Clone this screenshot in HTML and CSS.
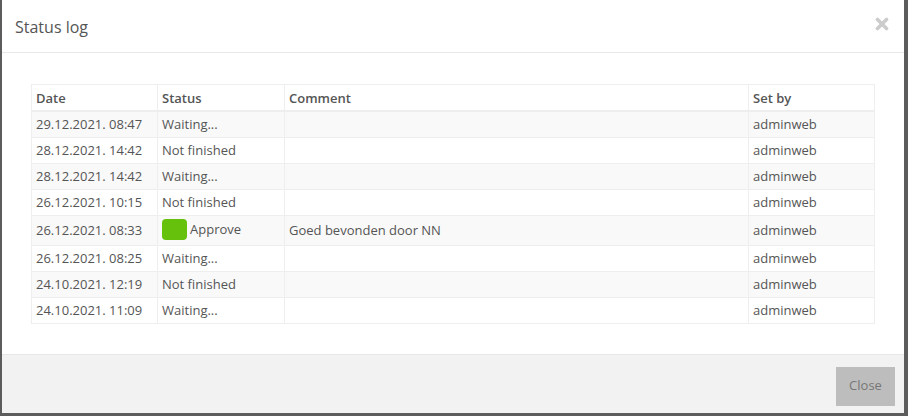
FILE: index.html
```html
<!DOCTYPE html>
<html lang="en">
<head>
  <meta charset="UTF-8" />
  <title>Status log</title>
  <link rel="stylesheet" href="styles.css">
</head>
<body>
  <div class="modal">
    <div class="modal-header">
      <h4>Status log</h4>
      <svg class="close" width="14" height="14" viewBox="0 0 14 14">
        <path d="M2.5 2.5 L11.5 11.5 M11.5 2.5 L2.5 11.5" stroke="#cccccc" stroke-width="3.6" stroke-linecap="round" />
      </svg>
    </div>

    <div class="modal-body">
      <table class="log">
        <thead>
          <tr>
            <th class="col-date">Date</th>
            <th class="col-status">Status</th>
            <th class="col-comment">Comment</th>
            <th class="col-by">Set by</th>
          </tr>
        </thead>
        <tbody>
          <tr><td>29.12.2021. 08:47</td><td>Waiting...</td><td></td><td>adminweb</td></tr>
          <tr><td>28.12.2021. 14:42</td><td>Not finished</td><td></td><td>adminweb</td></tr>
          <tr><td>28.12.2021. 14:42</td><td>Waiting...</td><td></td><td>adminweb</td></tr>
          <tr><td>26.12.2021. 10:15</td><td>Not finished</td><td></td><td>adminweb</td></tr>
          <tr class="tall"><td>26.12.2021. 08:33</td><td><span class="swatch"></span>Approve</td><td>Goed bevonden door NN</td><td>adminweb</td></tr>
          <tr><td>26.12.2021. 08:25</td><td>Waiting...</td><td></td><td>adminweb</td></tr>
          <tr><td>24.10.2021. 12:19</td><td>Not finished</td><td></td><td>adminweb</td></tr>
          <tr><td>24.10.2021. 11:09</td><td>Waiting...</td><td></td><td>adminweb</td></tr>
        </tbody>
      </table>
    </div>

    <div class="modal-footer">
      <button class="btn-close">Close</button>
    </div>
  </div>
</body>
</html>
```

FILE: styles.css
```css
body {
  margin: 0;
  padding: 0;
  background-color: #5c5c5c;
  font-family: "Open Sans", Arial, sans-serif;
  color: #555;
}

.modal {
  margin-left: 2px;
  width: 902px;
  height: 413px;
  background-color: #fff;
  display: flex;
  flex-direction: column;
}

.modal-header {
  flex-shrink: 0;
  height: 52px;
  border-bottom: 1px solid #e8e8e8;
  padding: 0 15px 0 13px;
  display: flex;
  align-items: center;
  justify-content: space-between;
}

.modal-header h4 {
  margin: 0;
  font-size: 16px;
  font-weight: normal;
  color: #555;
  padding-top: 2px;
}

.close {
  display: block;
  margin-top: -5px;
}

.modal-body {
  padding: 31px 29px 0;
  flex: 1;
}

.log {
  width: 844px;
  border-collapse: collapse;
  font-size: 13px;
  border: 1px solid #eee;
}

.log th,
.log td {
  text-align: left;
  padding: 4px 4px;
  line-height: 17px;
  border: 1px solid #eee;
  white-space: nowrap;
}

.log th {
  font-weight: 600;
  border-bottom: 2px solid #eee;
  padding-top: 5px;
  padding-bottom: 3px;
}

.log tbody tr:nth-child(odd) {
  background-color: #f9f9f9;
}

.log tr.tall td {
  padding-top: 5px;
  padding-bottom: 5px;
}

.col-date { width: 117px; }
.col-status { width: 118px; }
.col-comment { width: 455px; }

.swatch {
  display: inline-block;
  width: 25px;
  height: 21px;
  border-radius: 4px;
  background-color: #66c10c;
  vertical-align: middle;
  margin-right: 3px;
  margin-top: -2px;
}

.modal-footer {
  flex-shrink: 0;
  height: 59px;
  background-color: #f2f2f2;
  border-top: 1px solid #e6e6e6;
  display: flex;
  justify-content: flex-end;
  align-items: flex-start;
  padding: 12px 9px 0 0;
  box-sizing: border-box;
}

.btn-close {
  width: 59px;
  height: 39px;
  border: none;
  background-color: #bdbdbd;
  color: #777;
  font-family: "Open Sans", Arial, sans-serif;
  font-size: 13px;
  padding: 0 0 3px 0;
}
```
